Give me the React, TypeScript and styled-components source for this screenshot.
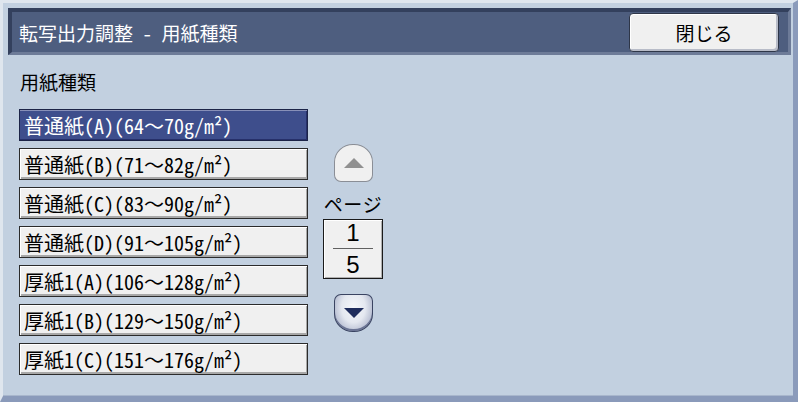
import React from "react";
import styled, { createGlobalStyle } from "styled-components";

const GlobalStyle = createGlobalStyle`
  html, body {
    margin: 0;
    padding: 0;
    background: #000;
  }
  * {
    box-sizing: border-box;
  }
`;

const MONO = `"Noto Sans Mono CJK JP", "Noto Sans CJK JP", "DejaVu Sans Mono", monospace`;

const Screen = styled.div`
  width: 798px;
  height: 402px;
  background: #c2d0e0;
  border-top: 3px solid #dfe6ee;
  border-left: 3px solid #dfe6ee;
  border-right: 5px solid #8b9bbb;
  border-bottom: 6px solid #8a9aba;
  box-shadow: inset 0 -1px 0 #a8b6cc;
  display: flex;
  flex-direction: column;
  font-family: ${MONO};
`;

const TitleBar = styled.header`
  margin: 5px 2px 0 5px;
  height: 47px;
  background: #4e5e7f;
  border-top: 4px solid #33405d;
  border-left: 4px solid #33405d;
  border-right: 3px solid #6d7b98;
  border-bottom: 3px solid #6d7b98;
  display: flex;
  align-items: center;
  justify-content: space-between;
  padding: 0 9px 0 7px;
`;

const Title = styled.h1`
  margin: 0;
  color: #fff;
  font-size: 19px;
  font-weight: 400;
  font-family: ${MONO};
`;

const CloseButton = styled.button`
  width: 150px;
  height: 39px;
  margin-top: 1px;
  background: #f0f0f0;
  border: 1px solid #2e3648;
  border-radius: 4px;
  box-shadow: inset 1px 1px 0 #ffffff, inset -2px -2px 0 #b8bcc8;
  font-family: ${MONO};
  font-size: 19px;
  color: #000;
  padding: 0;
`;

const Content = styled.main`
  padding: 16px 0 0 16px;
  display: flex;
  flex-direction: column;
`;

const SectionLabel = styled.div`
  font-size: 19px;
  line-height: 22px;
  color: #000;
  height: 22px;
  margin-left: 1px;
`;

const Body = styled.div`
  margin-top: 16px;
  display: flex;
  gap: 15px;
`;

const List = styled.div`
  display: flex;
  flex-direction: column;
  gap: 7px;
  width: 289px;
`;

const Item = styled.div<{ $selected?: boolean }>`
  height: 32px;
  display: flex;
  align-items: center;
  padding-left: 4px;
  font-family: ${MONO};
  font-size: 20px;
  letter-spacing: 0;
  white-space: nowrap;
  color: ${(p) => (p.$selected ? "#fff" : "#000")};
  background: ${(p) => (p.$selected ? "#3e4e8c" : "#f0f0f0")};
  border: 1px solid ${(p) => (p.$selected ? "#1c2448" : "#2b2b2b")};
  box-shadow: ${(p) =>
    p.$selected
      ? "inset 0 1px 0 #8890b8, inset -1px -1px 0 #26306a"
      : "inset 1px 1px 0 #ffffff, inset -1px -2px 0 #a8a8a8"};
`;

const Pager = styled.div`
  width: 60px;
  display: flex;
  flex-direction: column;
  align-items: center;
  padding-top: 35px;
`;

const ArrowButton = styled.button<{ $dir: "up" | "down"; $disabled?: boolean }>`
  width: 39px;
  height: 38px;
  padding: 0;
  margin-left: 1px;
  display: flex;
  align-items: center;
  justify-content: center;
  border-radius: ${(p) =>
    p.$dir === "up" ? "19px 19px 7px 7px / 18px 18px 7px 7px" : "7px 7px 19px 19px / 7px 7px 18px 18px"};
  border: 1px solid ${(p) => (p.$disabled ? "#8a8e96" : "#3a4462")};
  background: ${(p) =>
    p.$disabled
      ? "#f0f0f0"
      : "radial-gradient(ellipse at 50% 35%, #f4f6fa 0%, #e4e8f0 45%, #a8b0c8 85%, #8890ac 100%)"};
  box-shadow: ${(p) =>
    p.$disabled ? "none" : "inset 0 -2px 0 #6a7494"};
`;

const PageLabel = styled.div`
  margin-top: 12px;
  font-size: 19px;
  line-height: 20px;
  color: #000;
  letter-spacing: 0.5px;
`;

const PageBox = styled.div`
  margin-top: 5px;
  width: 60px;
  height: 60px;
  background: #f0f0f0;
  border: 1px solid #1a1a1a;
  box-shadow: inset 1px 1px 0 #fff, inset -1px -1px 0 #b0b0b0;
  display: flex;
  flex-direction: column;
  align-items: center;
  justify-content: center;
  font-family: "Liberation Sans", sans-serif;
  font-size: 24px;
  line-height: 22px;
  color: #000;
`;

const FractionLine = styled.div`
  width: 40px;
  height: 1px;
  margin: 4px 0 5px;
  background: #606060;
`;

const DownSpacer = styled.div`
  height: 15px;
`;

const Triangle = ({ dir, color }: { dir: "up" | "down"; color: string }) => (
  <svg width="20" height="10" viewBox="0 0 20 10">
    {dir === "up" ? (
      <polygon points="10,0 20,10 0,10" fill={color} />
    ) : (
      <polygon points="0,0 20,0 10,10" fill={color} />
    )}
  </svg>
);

const paperTypes = [
  "普通紙(A)(64～70g/m²)",
  "普通紙(B)(71～82g/m²)",
  "普通紙(C)(83～90g/m²)",
  "普通紙(D)(91～105g/m²)",
  "厚紙1(A)(106～128g/m²)",
  "厚紙1(B)(129～150g/m²)",
  "厚紙1(C)(151～176g/m²)",
];

export default function App() {
  return (
    <>
      <GlobalStyle />
      <Screen>
        <TitleBar>
          <Title>転写出力調整 - 用紙種類</Title>
          <CloseButton>閉じる</CloseButton>
        </TitleBar>
        <Content>
          <SectionLabel>用紙種類</SectionLabel>
          <Body>
            <List>
              {paperTypes.map((name, i) => (
                <Item key={name} $selected={i === 0}>
                  {name}
                </Item>
              ))}
            </List>
            <Pager>
              <ArrowButton $dir="up" $disabled>
                <Triangle dir="up" color="#909090" />
              </ArrowButton>
              <PageLabel>ページ</PageLabel>
              <PageBox>
                <span>1</span>
                <FractionLine />
                <span>5</span>
              </PageBox>
              <DownSpacer />
              <ArrowButton $dir="down">
                <Triangle dir="down" color="#1e2c5c" />
              </ArrowButton>
            </Pager>
          </Body>
        </Content>
      </Screen>
    </>
  );
}
